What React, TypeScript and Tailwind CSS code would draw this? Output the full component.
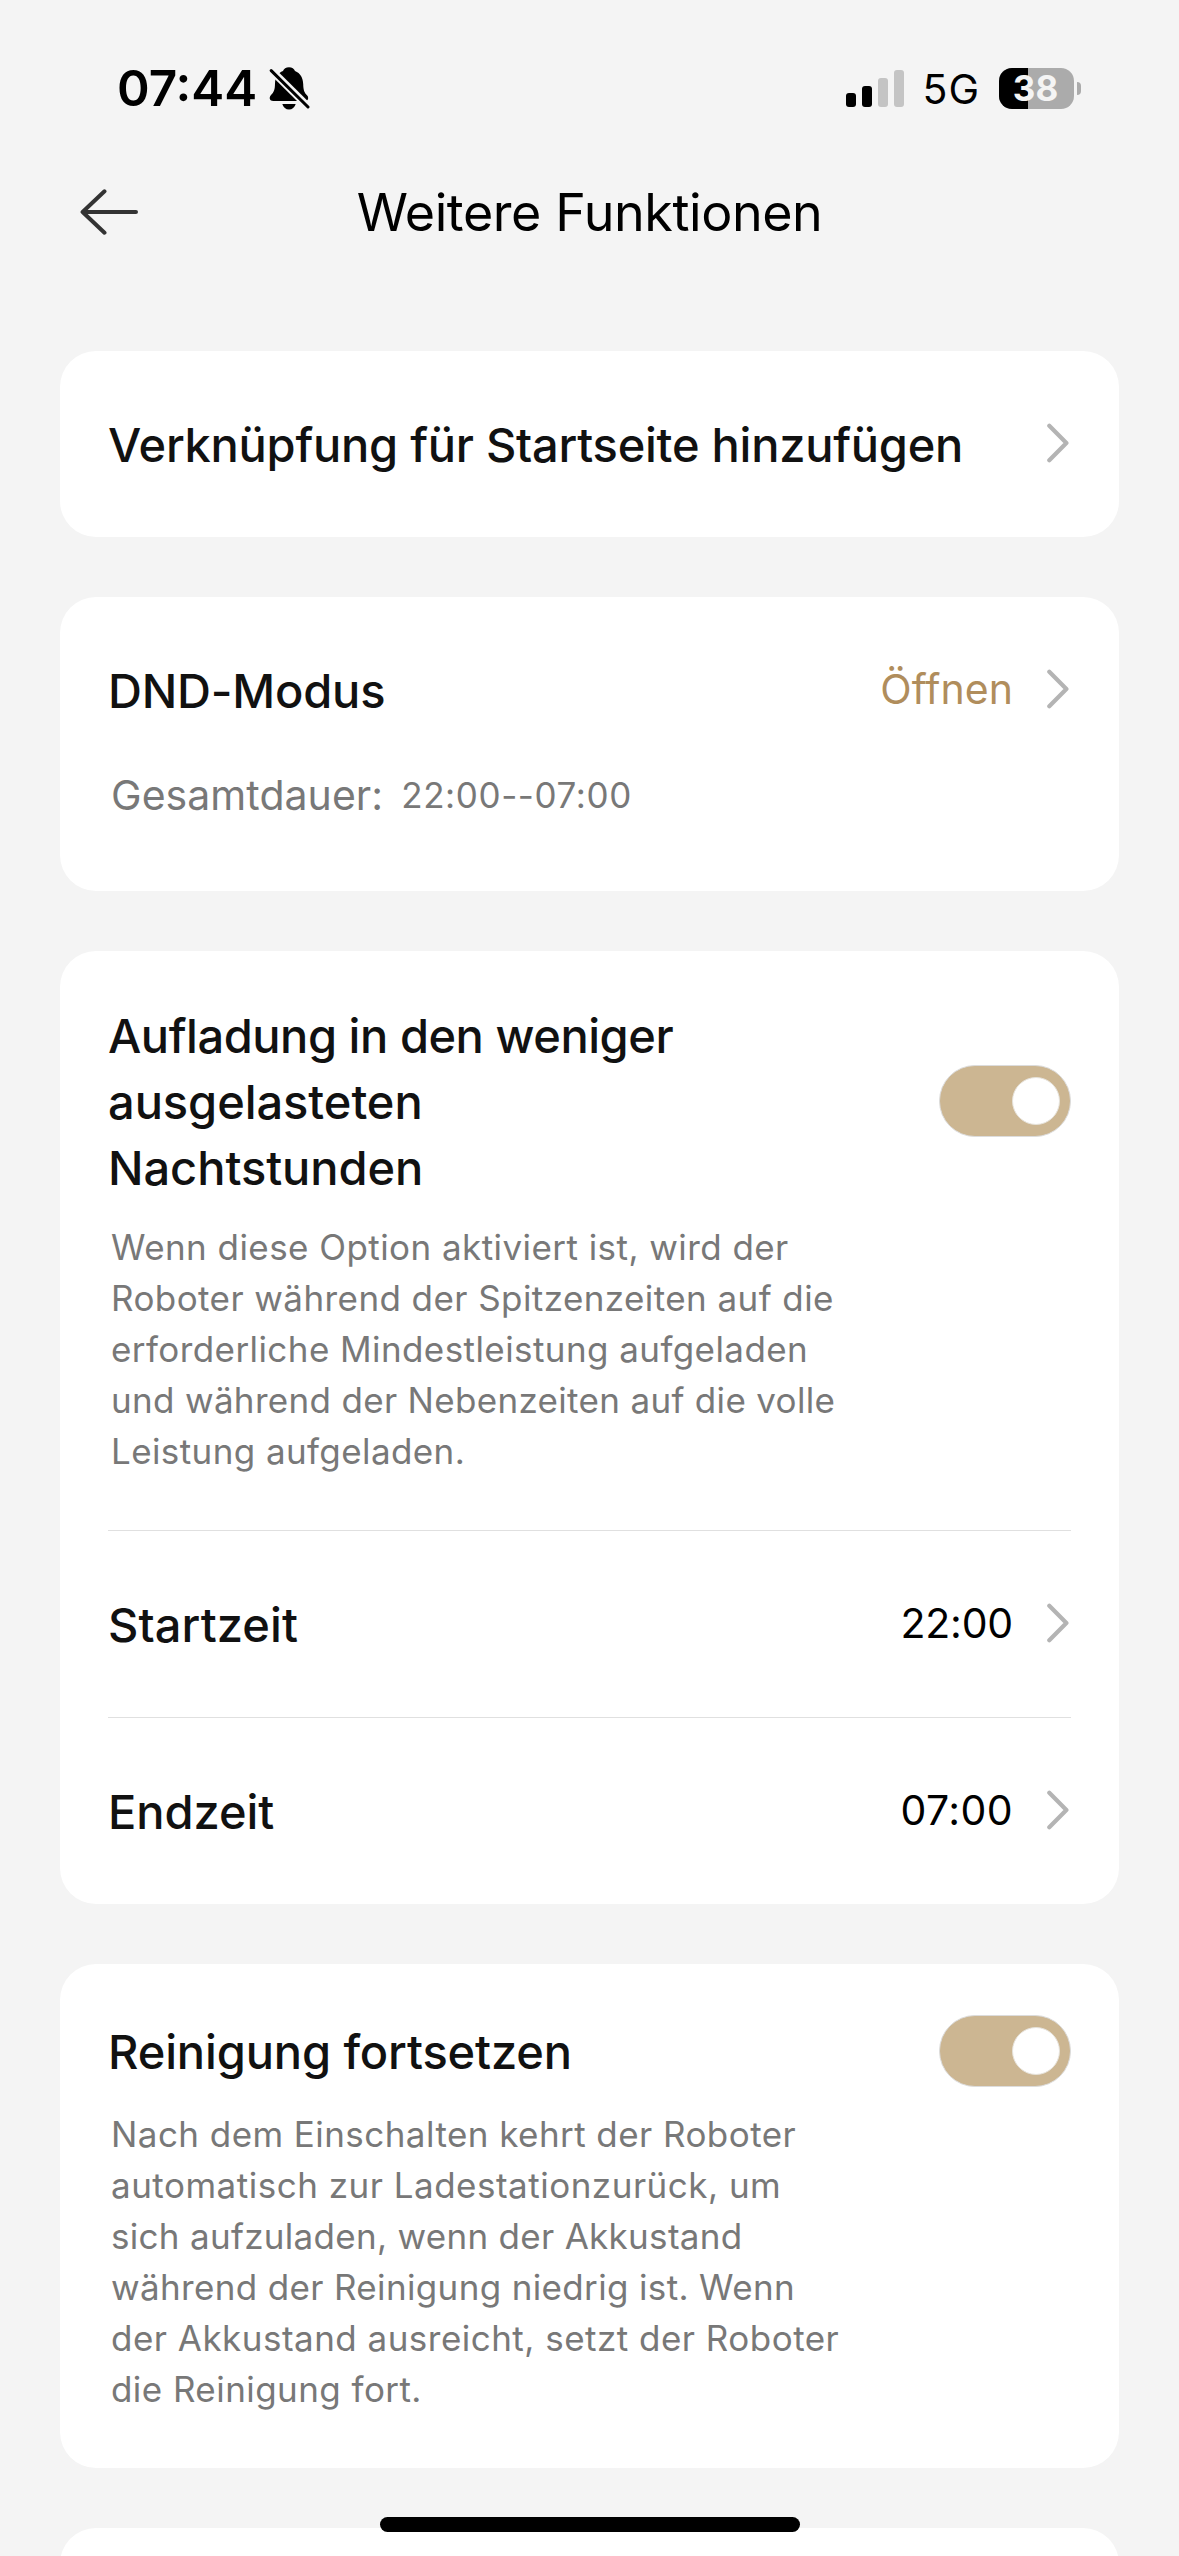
import React, { useState } from 'react';

// Icons
const BellOffIcon: React.FC<{ className?: string }> = ({ className }) => (
    <svg xmlns="http://www.w3.org/2000/svg" className={className} viewBox="7 6 41 44" fill="none" aria-hidden="true">
        <path d="M27 7.3c3 0 5.2 1.5 6 3.8 5.4 2 8 6.900 8.200 13 .2 6.300 1 8.400 3.800 11.200C47.300 37.600 46.200 41 42.500 41H11.500C7.500 41 6.600 37.500 9 35c2.900-2.900 3.900-5 4-11.500.1-6 3-10.500 8-12.400.8-2.300 3-3.800 6-3.800Z" fill="#000" />
        <path d="M20.300 44H33.700C32.700 47.500 30.200 49.600 27 49.600S21.300 47.500 20.300 44Z" fill="#000" />
        <path d="M7 8L48 48.500" stroke="#f4f4f4" strokeWidth="7.600" />
        <path d="M9.200 10.600L46 47" stroke="#000" strokeWidth="3" strokeLinecap="round" />
    </svg>
);

const BackIcon: React.FC<{ className?: string }> = ({ className }) => (
    <svg xmlns="http://www.w3.org/2000/svg" className={className} viewBox="0 0 58 46" fill="none" stroke="#333" strokeWidth="4" strokeLinecap="round" strokeLinejoin="round" aria-hidden="true">
        <path d="M24.500 2.300L2.600 23L24.500 43.700M2.600 23H56" />
    </svg>
);

const ChevronIcon: React.FC<{ className?: string }> = ({ className }) => (
    <svg xmlns="http://www.w3.org/2000/svg" className={className} viewBox="0 0 24 40" fill="none" stroke="#b4b4b4" strokeWidth="4.200" strokeLinecap="round" strokeLinejoin="round" aria-hidden="true">
        <path d="M2.300 2.800L19.400 20L2.300 37.200" />
    </svg>
);

const StatusBar: React.FC = () => (
  <div className="flex h-[176px] shrink-0 items-center justify-between pl-[117px] pr-[98px]">
    <div className="flex items-center gap-[12px]">
      <span className="text-[49.5px] font-semibold leading-[60px]">07:44</span>
      <BellOffIcon className="h-[44px] w-[41px]" />
    </div>
    <div className="flex items-center">
      <div className="flex h-[37px] items-end gap-[6px]">
        <div className="h-[14px] w-[10px] rounded-[3px] bg-black" />
        <div className="h-[21px] w-[10px] rounded-[3px] bg-black" />
        <div className="h-[29px] w-[10px] rounded-[3px] bg-[#c4c4c4]" />
        <div className="h-[37px] w-[10px] rounded-[3px] bg-[#c4c4c4]" />
      </div>
      <span className="ml-[18.5px] w-[76.5px] pt-[2px] text-[41px] leading-[50px] tracking-[1px]">5G</span>
      <div className="relative flex h-[41px] w-[75px] items-center justify-center overflow-hidden rounded-[13px] bg-[#ababab]">
        <div className="absolute inset-y-0 left-0 w-[29px] bg-black" />
        <span className="relative pr-[2px] text-[35px] font-bold leading-[41px] text-[#f4f4f4]">38</span>
      </div>
      <div className="ml-[3px] h-[13px] w-[4px] rounded-r-full bg-[#ababab]" />
    </div>
  </div>
);

const Card: React.FC<{ className?: string; children?: React.ReactNode }> = ({ className = '', children }) => (
  <section className={`shrink-0 rounded-[36px] bg-white px-[48px] ${className}`}>{children}</section>
);

const titleStyle = 'text-[47px] font-medium text-[#111]';

interface LinkRowProps {
  title: string;
  titleClass?: string;
  value?: string;
  valueClass?: string;
  className?: string;
}

const LinkRow: React.FC<LinkRowProps> = ({ title, titleClass = '', value, valueClass = 'tracking-[-0.2px]', className = 'h-[186px]' }) => (
  <div className={`flex items-center justify-between ${className}`}>
    <span className={`pt-px leading-[57px] ${titleStyle} ${titleClass}`}>{title}</span>
    <div className="flex items-center gap-[34px] pb-[2px]">
      {value && <span className={`text-[41px] leading-[50px] ${valueClass}`}>{value}</span>}
      <ChevronIcon className="h-[40px] w-[24px]" />
    </div>
  </div>
);

const Toggle: React.FC<{ label: string }> = ({ label }) => {
  const [on, setOn] = useState(true);

  return (
    <button
      role="switch"
      aria-checked={on}
      aria-label={label}
      onClick={() => setOn(!on)}
      className={`flex h-[72px] w-[132px] shrink-0 items-center rounded-full border border-[#dcdcdc] px-[10px] ${on ? 'justify-end bg-[#ccb692]' : 'justify-start bg-[#e5e5e5]'}`}
    >
      <span className="h-[48px] w-[48px] rounded-full border border-[#e6e2da] bg-white" />
    </button>
  );
};

interface Line {
  text: string;
  className?: string;
}

const Description: React.FC<{ className?: string; lines: Line[] }> = ({ className = '', lines }) => (
  <p className={`ml-[3px] text-[35px] leading-[51px] text-[#787878] ${className}`}>
    {lines.map((line) => (
      <span key={line.text} className={`block ${line.className ?? 'tracking-[0.44px]'}`}>{line.text}</span>
    ))}
  </p>
);

const nightCharging: Line[] = [
  { text: 'Wenn diese Option aktiviert ist, wird der' },
  { text: 'Roboter während der Spitzenzeiten auf die', className: 'tracking-[0.42px]' },
  { text: 'erforderliche Mindestleistung aufgeladen', className: 'tracking-[0.42px]' },
  { text: 'und während der Nebenzeiten auf die volle', className: 'tracking-[0.32px]' },
  { text: 'Leistung aufgeladen.', className: 'tracking-[0.4px]' },
];

const resumeCleaning: Line[] = [
  { text: 'Nach dem Einschalten kehrt der Roboter' },
  { text: 'automatisch zur Ladestationzurück, um', className: 'tracking-[0.5px]' },
  { text: 'sich aufzuladen, wenn der Akkustand', className: 'tracking-[0.3px]' },
  { text: 'während der Reinigung niedrig ist. Wenn', className: 'tracking-[0.35px]' },
  { text: 'der Akkustand ausreicht, setzt der Roboter', className: 'tracking-[0.48px]' },
  { text: 'die Reinigung fort.' },
];

const App: React.FC = () => (
  <div className="relative flex h-[2556px] w-[1179px] flex-col overflow-hidden bg-[#f4f4f4] font-['Inter',sans-serif] text-black">
    <StatusBar />

    <header className="grid h-[72px] shrink-0 grid-cols-[1fr_auto_1fr] items-center px-[80px]">
      <button aria-label="Zurück">
        <BackIcon className="h-[46px] w-[58px]" />
      </button>
      <h1 className="pt-px text-[52px] leading-[64px] tracking-[-0.43px]">Weitere Funktionen</h1>
    </header>

    <main className="mt-[103px] flex shrink-0 flex-col gap-[60px] px-[60px]">
      <Card>
        <LinkRow title="Verknüpfung für Startseite hinzufügen" titleClass="tracking-[-0.25px]" />
      </Card>

      <Card className="h-[294px] pt-[68px]">
        <LinkRow
          title="DND-Modus"
          titleClass="tracking-[-0.2px]"
          value="Öffnen"
          valueClass="tracking-[0.05px] text-[#b08d5c]"
          className="h-[50px]"
        />
        <div className="ml-[3px] mt-[55px] flex items-center gap-[18px] text-[#787878]">
          <span className="text-[41px] leading-[50px] tracking-[0.05px]">Gesamtdauer:</span>
          <span className="text-[35px] leading-[50px] tracking-[0.6px]">22:00--07:00</span>
        </div>
      </Card>

      <Card className="pt-[51.5px]">
        <div className="flex items-center justify-between">
          <h2 className={`leading-[66px] ${titleStyle}`}>
            <span className="block tracking-[-0.46px]">Aufladung in den weniger</span>
            <span className="block tracking-[-0.06px]">ausgelasteten</span>
            <span className="block tracking-[-0.06px]">Nachtstunden</span>
          </h2>
          <div className="pb-[2px]">
            <Toggle label="Aufladung in den weniger ausgelasteten Nachtstunden" />
          </div>
        </div>
        <Description className="mb-[53.5px] mt-[21px]" lines={nightCharging} />
        <div className="border-t border-[#e0e0e0]">
          <LinkRow title="Startzeit" value="22:00" titleClass="tracking-[0.1px]" />
        </div>
        <div className="border-t border-[#e0e0e0]">
          <LinkRow title="Endzeit" value="07:00" valueClass="tracking-[0.4px]" titleClass="tracking-[-0.05px]" />
        </div>
      </Card>

      <Card className="pb-[53.5px] pt-[51px]">
        <div className="flex h-[72px] items-center justify-between">
          <h2 className={`pt-px leading-[57px] tracking-[-0.13px] ${titleStyle}`}>Reinigung fortsetzen</h2>
          <Toggle label="Reinigung fortsetzen" />
        </div>
        <Description className="mt-[21.5px]" lines={resumeCleaning} />
      </Card>

      <Card className="h-[200px]" />
    </main>

    {/* Home indicator */}
    <div className="absolute bottom-[24px] left-1/2 h-[15px] w-[420px] -translate-x-1/2 rounded-full bg-black" />
  </div>
);

export default App;
